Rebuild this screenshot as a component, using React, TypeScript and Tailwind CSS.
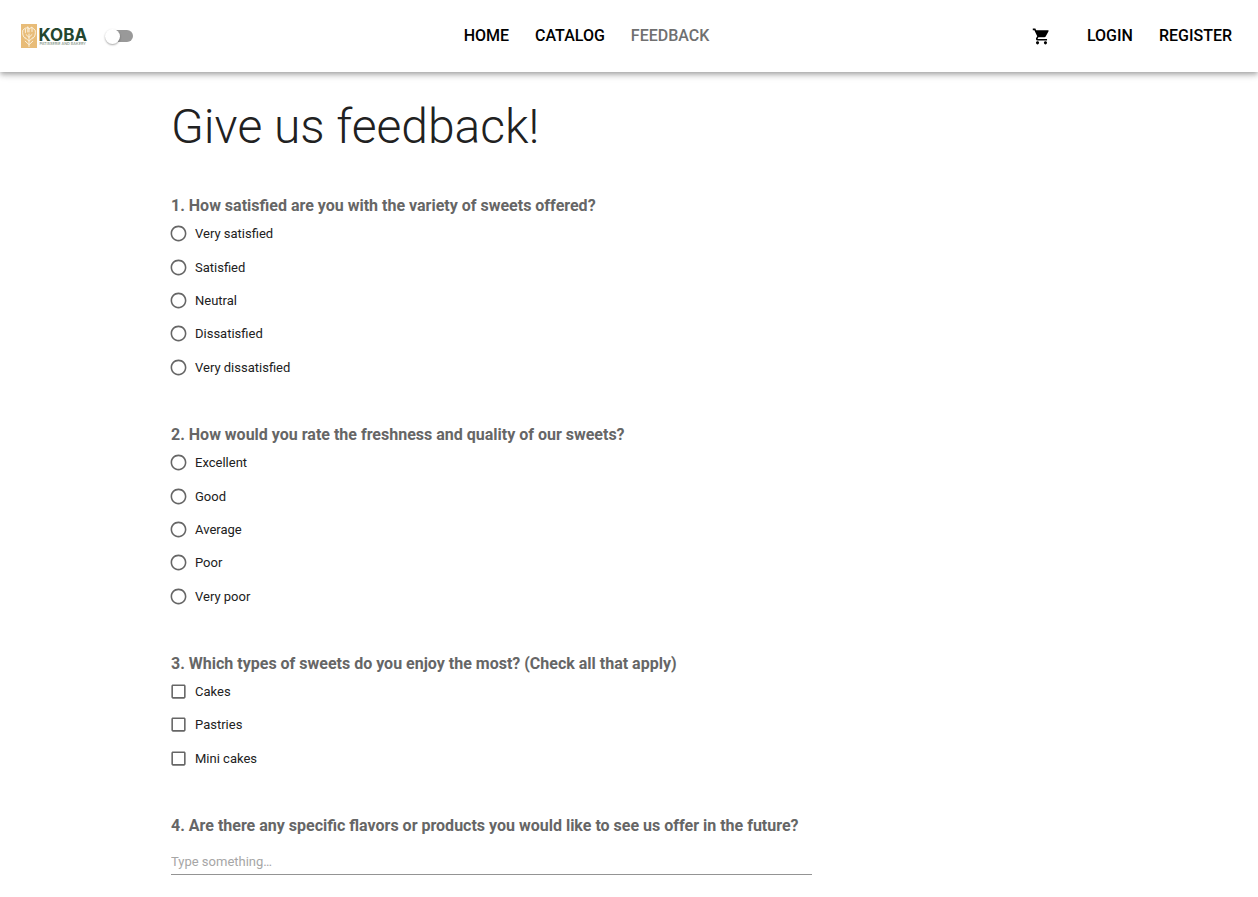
import { useState } from "react";
import { MdShoppingCart } from "react-icons/md";

type Kind = "radio" | "checkbox";

function Logo() {
  return (
    <svg viewBox="0 0 67 24" className="h-6 w-[67px]" role="img" aria-label="Koba Patisserie and Bakery">
      <rect x="0" y="0" width="16" height="24" fill="#e8bc78" />
      <g fill="none" stroke="#fdf6e8" strokeWidth="0.9" strokeLinecap="round" strokeLinejoin="round">
        <path d="M8 22.5V10" />
        <path d="M4.2 17.2L8 20.7l3.8-3.500M4.200 13.700L8 17.200l3.800-3.500M5 10.500l3 2.900 3-2.900" />
        <path d="M4.200 14.500C1.800 13 1.300 9.500 1.800 6.200L4.400 4M11.800 14.500c2.400-1.500 2.900-5 2.400-8.300L11.600 4" />
        <path d="M4.400 8.500V4.800L6.800 3l1.200 2 3-2v4.500M6.800 3v5M8 5v3" />
      </g>
      <text x="17.500" y="16.700" fill="#24462f" fontFamily="Inter, sans-serif" fontWeight="700" fontSize="17">
        KOBA
      </text>
      <text x="18.500" y="20.700" fill="#7f9384" fontFamily="Inter, sans-serif" fontWeight="500" fontSize="3.800">
        PATISSERIE AND BAKERY
      </text>
    </svg>
  );
}

function ThemeSwitch() {
  const [dark, setDark] = useState(false);
  return (
    <button
      type="button"
      role="switch"
      aria-checked={dark}
      aria-label="Dark mode"
      onClick={() => setDark(!dark)}
      className="flex h-4 w-7 items-center"
    >
      <span className="flex h-3 w-full items-center rounded-full bg-linear-to-r from-transparent from-20% to-[#999] to-20%">
        <span
          className={
            "size-[15px] rounded-full bg-white shadow-[0_1px_2px_rgba(0,0,0,0.35)] " + (dark ? "ml-auto" : "")
          }
        />
      </span>
    </button>
  );
}

function Header() {
  return (
    <header className="flex min-h-[72px] items-center justify-between bg-white pr-[26px] pl-[21px] text-base font-medium text-black shadow-[0_2px_4px_-1px_rgba(0,0,0,0.2),0_4px_5px_0_rgba(0,0,0,0.14),0_1px_10px_0_rgba(0,0,0,0.12)]">
      <div className="flex items-center gap-[17px] pr-2">
        <a href="#home">
          <Logo />
        </a>
        <ThemeSwitch />
      </div>
      <nav className="flex gap-[26px]">
        <a href="#home">HOME</a>
        <a href="#catalog">CATALOG</a>
        <a href="#feedback" aria-current="page" className="text-[#707070]">
          FEEDBACK
        </a>
      </nav>
      <div className="flex items-center gap-[26px]">
        <a href="#cart" aria-label="Cart" className="mr-2.5">
          <MdShoppingCart className="size-[19px]" />
        </a>
        <a href="#login">LOGIN</a>
        <a href="#register">REGISTER</a>
      </div>
    </header>
  );
}

function Choice({ kind, name, label }: { kind: Kind; name: string; label: string }) {
  return (
    <label className="relative -ml-0.5 flex cursor-pointer items-center gap-[7px] justify-self-start text-[13px] leading-[19px] text-[#212121]">
      <input type={kind} name={name} value={label} className="peer absolute size-[19px] cursor-pointer opacity-0" />
      <svg viewBox="0 0 24 24" className="size-[19px] fill-[#666] peer-checked:hidden" aria-hidden="true">
        {kind === "radio" ? (
          <path d="M12 2C6.480 2 2 6.480 2 12s4.480 10 10 10 10-4.480 10-10S17.520 2 12 2m0 18c-4.420 0-8-3.580-8-8s3.580-8 8-8 8 3.580 8 8-3.580 8-8 8" />
        ) : (
          <path d="M19 5v14H5V5zm0-2H5c-1.100 0-2 .900-2 2v14c0 1.100.900 2 2 2h14c1.100 0 2-.900 2-2V5c0-1.100-.900-2-2-2" />
        )}
      </svg>
      <svg viewBox="0 0 24 24" className="hidden size-[19px] fill-[#666] peer-checked:block" aria-hidden="true">
        {kind === "radio" ? (
          <path d="M12 7a5 5 0 1 0 0 10 5 5 0 0 0 0-10m0-5a10 10 0 1 0 0 20 10 10 0 0 0 0-20m0 18a8 8 0 1 1 0-16 8 8 0 0 1 0 16" />
        ) : (
          <path d="M19 3H5a2 2 0 0 0-2 2v14a2 2 0 0 0 2 2h14a2 2 0 0 0 2-2V5a2 2 0 0 0-2-2m-9 14l-5-5 1.410-1.410L10 14.170l7.590-7.590L19 8z" />
        )}
      </svg>
      {label}
    </label>
  );
}

type QuestionProps = { kind: Kind; name: string; title: string; options: string[] };

function Question({ kind, name, title, options }: QuestionProps) {
  return (
    <fieldset>
      <legend className="text-base leading-[23px] font-bold text-[#666]">{title}</legend>
      <div
        className={
          "grid auto-rows-fr items-center " + (options.length > 3 ? "min-h-[167px]" : "min-h-[100px]")
        }
      >
        {options.map((option) => (
          <Choice key={option} kind={kind} name={name} label={option} />
        ))}
      </div>
    </fieldset>
  );
}

const questions: QuestionProps[] = [
  {
    kind: "radio",
    name: "variety",
    title: "1. How satisfied are you with the variety of sweets offered?",
    options: ["Very satisfied", "Satisfied", "Neutral", "Dissatisfied", "Very dissatisfied"],
  },
  {
    kind: "radio",
    name: "quality",
    title: "2. How would you rate the freshness and quality of our sweets?",
    options: ["Excellent", "Good", "Average", "Poor", "Very poor"],
  },
  {
    kind: "checkbox",
    name: "types",
    title: "3. Which types of sweets do you enjoy the most? (Check all that apply)",
    options: ["Cakes", "Pastries", "Mini cakes"],
  },
];

export default function App() {
  return (
    <div className="min-h-screen bg-white font-[Roboto,sans-serif]">
      <Header />
      <main className="mx-auto max-w-[964px] px-6 pt-6 pb-5">
        <h1 className="text-5xl leading-[62px] font-light text-[#212121]">Give us feedback!</h1>
        <form className="mt-9 flex flex-col items-start gap-[39px]">
          {questions.map((question) => (
            <Question key={question.name} {...question} />
          ))}
          <div className="flex w-full max-w-[641px] flex-col gap-[11px]">
            <label htmlFor="ideas" className="text-base leading-[23px] font-bold text-[#666]">
              4. Are there any specific flavors or products you would like to see us offer in the future?
            </label>
            <input
              id="ideas"
              type="text"
              placeholder="Type something…"
              className="w-full border-b border-[#949494] pt-1 pb-0.5 text-[13px] leading-5 text-[#212121] outline-none placeholder:text-[#a6a6a6]"
            />
          </div>
        </form>
      </main>
    </div>
  );
}
